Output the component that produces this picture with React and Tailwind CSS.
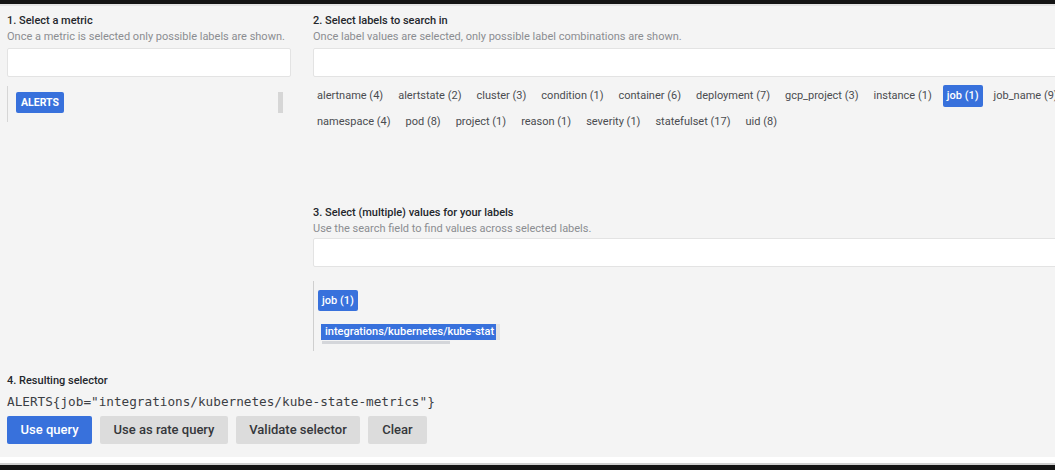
import React from "react";

const labels = [
  { name: "alertname", count: 4 },
  { name: "alertstate", count: 2 },
  { name: "cluster", count: 3 },
  { name: "condition", count: 1 },
  { name: "container", count: 6 },
  { name: "deployment", count: 7 },
  { name: "gcp_project", count: 3 },
  { name: "instance", count: 1 },
  { name: "job", count: 1, selected: true },
  { name: "job_name", count: 9 },
  { name: "namespace", count: 4 },
  { name: "pod", count: 8 },
  { name: "project", count: 1 },
  { name: "reason", count: 1 },
  { name: "severity", count: 1 },
  { name: "statefulset", count: 17 },
  { name: "uid", count: 8 },
];

const SectionTitle = ({ title, hint }) => (
  <div>
    <div className="text-[11px] leading-[16px] font-medium text-[#24272c]">{title}</div>
    <div className="text-[11px] leading-[16px] text-[#8b8d91] whitespace-nowrap">{hint}</div>
  </div>
);

const Input = () => (
  <div className="mt-[3px] h-[29px] bg-white border border-[#e3e3e3] rounded-[2px]" />
);

export default function App() {
  return (
    <div
      className="w-[1055px] h-[470px] flex flex-col overflow-hidden bg-white"
      style={{ fontFamily: "Roboto, 'Liberation Sans', sans-serif" }}
    >
      {/* top bar */}
      <div className="h-[4px] bg-[#141414]" />
      <div className="h-[2px] bg-[#e4e4e4]" />

      <div className="flex-1 bg-[#f4f4f4] pl-[7px] pt-[7px] flex flex-col overflow-hidden">
        <div className="flex gap-[22px]">
          {/* 1. metric */}
          <div className="w-[284px] shrink-0">
            <SectionTitle
              title="1. Select a metric"
              hint="Once a metric is selected only possible labels are shown."
            />
            <Input />
            <div className="mt-[9px] h-[36px] border-l border-[#d6d6d6] flex items-start justify-between pl-[8px] pr-[8px] pt-[6px]">
              <span className="bg-[#3871dc] text-white text-[10.5px] font-bold px-[5px] h-[21px] leading-[21px] rounded-[2px]">
                ALERTS
              </span>
              <span className="w-[5px] h-[21px] bg-[#d6d6d6]" />
            </div>
          </div>

          {/* 2 + 3. labels / values */}
          <div className="w-[790px] shrink-0">
            <SectionTitle
              title="2. Select labels to search in"
              hint="Once label values are selected, only possible label combinations are shown."
            />
            <Input />
            <div className="mt-[8px] flex flex-wrap gap-y-[4px] gap-x-[7px] pr-[20px]">
              {labels.map((l) => (
                <span
                  key={l.name}
                  className={`h-[22px] leading-[22px] px-[4px] rounded-[2px] text-[11px] whitespace-nowrap ${
                    l.selected ? "bg-[#3871dc] text-white font-medium" : "text-[#4a4c50]"
                  }`}
                >
                  {l.name} ({l.count})
                </span>
              ))}
            </div>

            <div className="mt-[72px]">
              <SectionTitle
                title="3. Select (multiple) values for your labels"
                hint="Use the search field to find values across selected labels."
              />
              <div className="mt-[1px] h-[29px] bg-white border border-[#e3e3e3] rounded-[2px]" />
              <div className="mt-[14px] h-[70px] border-l border-[#cfcfcf] pl-[4px] pt-[6px]">
                <span className="inline-block bg-[#3871dc] text-white text-[11px] font-medium px-[4px] h-[21px] leading-[21px] rounded-[2px]">
                  job (1)
                </span>
                <div className="mt-[13px] ml-[3px] flex items-start">
                  <div className="w-[175px] overflow-hidden">
                    <span className="block bg-[#3871dc] text-white text-[11px] font-medium px-[4px] h-[16px] leading-[16px] whitespace-nowrap">
                      integrations/kubernetes/kube-stat
                    </span>
                  </div>
                  <span className="w-[4px] h-[16px] bg-[#e4e4e4]" />
                </div>
                <div className="ml-[4px] mt-[1px] w-[128px] h-[3px] bg-[#d4d6da]" />
              </div>
            </div>
          </div>
        </div>

        {/* 4. result */}
        <div className="mt-[22px]">
          <div className="text-[11px] leading-[16px] font-medium text-[#24272c]">4. Resulting selector</div>
          <div
            className="mt-[4px] text-[12.7px] leading-[18px] text-[#3c3f44] whitespace-nowrap"
            style={{ fontFamily: "'DejaVu Sans Mono', 'Liberation Mono', monospace" }}
          >
            ALERTS{"{"}job="integrations/kubernetes/kube-state-metrics"{"}"}
          </div>
          <div className="mt-[5px] flex gap-[8px]">
            <button className="h-[28px] w-[85px] bg-[#3871dc] text-white text-[13px] font-medium rounded-[2px]">
              Use query
            </button>
            <button className="h-[28px] w-[128px] bg-[#dcdcdc] text-[#35373b] text-[13px] font-medium rounded-[2px]">
              Use as rate query
            </button>
            <button className="h-[28px] w-[124px] bg-[#dcdcdc] text-[#35373b] text-[13px] font-medium rounded-[2px]">
              Validate selector
            </button>
            <button className="h-[28px] w-[59px] bg-[#dcdcdc] text-[#35373b] text-[13px] font-medium rounded-[2px]">
              Clear
            </button>
          </div>
        </div>
      </div>

      {/* bottom bar */}
      <div className="h-[6px] bg-white" />
      <div className="h-[2px] bg-[#cfcfcf]" />
      <div className="h-[5px] bg-[#141414]" />
    </div>
  );
}
